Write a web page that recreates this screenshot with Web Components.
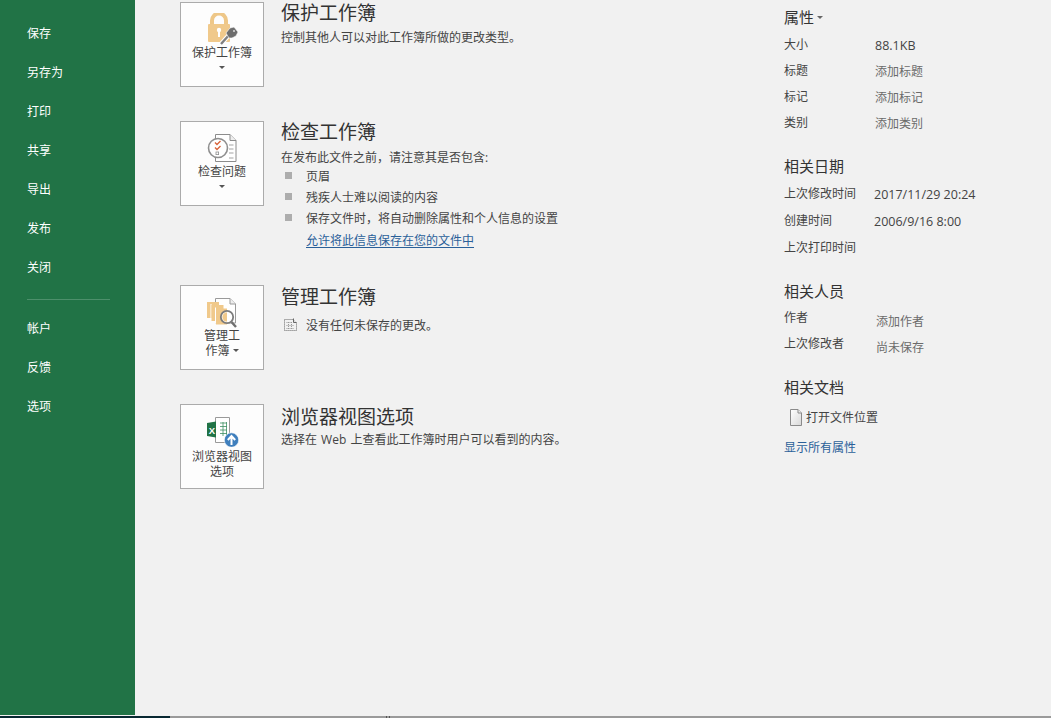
<!DOCTYPE html>
<html lang="zh">
<head>
<meta charset="utf-8">
<title>信息</title>
<style>
html,body{margin:0;padding:0;height:718px;overflow:hidden;background:#f1f1f1;font-family:"Open Sans","Noto Sans CJK SC",sans-serif;font-size:12px;color:#444}
</style>
</head>
<body>
<app-shell>
  <side-nav slot="nav">
    <nav-item>保存</nav-item><nav-item>另存为</nav-item><nav-item>打印</nav-item><nav-item>共享</nav-item><nav-item>导出</nav-item><nav-item>发布</nav-item><nav-item>关闭</nav-item>
    <nav-rule></nav-rule>
    <nav-item>帐户</nav-item><nav-item>反馈</nav-item><nav-item>选项</nav-item>
  </side-nav>

  <info-column slot="main">
    <info-section top="2" lift="-1" heading="保护工作簿">
      <tile-button slot="tile" caret="below" label="保护工作簿">
        <svg slot="icon" width="36" height="32" viewBox="0 0 36 32">
          <path d="M8 12V7.500a7 7 0 0 1 14 0V12" fill="none" stroke="#eec788" stroke-width="4"/>
          <rect x="4" y="11" width="22" height="18" rx="1" fill="#f0c98b"/>
          <circle cx="15" cy="17" r="2.200" fill="#fff"/><rect x="14" y="18" width="2" height="6" fill="#fff"/>
          <path d="M17 31l8-9" stroke="#fff" stroke-width="4.500"/>
          <path d="M17 31l8-9" stroke="#7f7f7f" stroke-width="2.400"/>
          <path d="M22 20l4-5 4-1 4 5-2 4-4 2-3 0z" fill="#6e6e6e" stroke="#fff" stroke-width=".6"/>
          <circle cx="30" cy="18" r="1" fill="#ddd"/>
        </svg>
      </tile-button>
      <desc-line>控制其他人可以对此工作簿所做的更改类型。</desc-line>
    </info-section>

    <info-section top="34" lift="-1" heading="检查工作簿">
      <tile-button slot="tile" caret="below" label="检查问题">
        <svg slot="icon" width="36" height="32" viewBox="0 0 36 32">
          <path d="M11.500 2.500H26l6 6v21H11.500z" fill="#fff" stroke="#8c8c8c"/>
          <path d="M26 2.500v6h6" fill="#eee" stroke="#8c8c8c"/>
          <path d="M25 13h4.500M25 17h4.500M25 21h4.500M25 26h4.500" stroke="#a3a3a3"/>
          <circle cx="14" cy="16" r="9.500" fill="#fff" stroke="#8f8f8f" stroke-width="1.600"/>
          <path d="M11 10.500l2 2 3.500-3.500M11 15.500l2 2 3.500-3.500" fill="none" stroke="#d9653b" stroke-width="1.400"/>
          <rect x="12" y="20" width="2.600" height="2.600" fill="none" stroke="#8f8f8f" stroke-width=".8"/>
        </svg>
      </tile-button>
      <desc-line extra>在发布此文件之前，请注意其是否包含:</desc-line>
      <bullet-line first>页眉</bullet-line>
      <bullet-line>残疾人士难以阅读的内容</bullet-line>
      <bullet-line>保存文件时，将自动删除属性和个人信息的设置</bullet-line>
      <bullet-line plain><a-link>允许将此信息保存在您的文件中</a-link></bullet-line>
    </info-section>

    <info-section top="35" lift="0" heading="管理工作簿">
      <tile-button slot="tile" label="管理工" label2="作簿" caret="inline">
        <svg slot="icon" width="36" height="32" viewBox="0 0 36 32">
          <path d="M11.500 2.500H26l5.500 5.500v19H11.500z" fill="#fff" stroke="#9a9a9a"/>
          <path d="M26 2.500V8h5.500" fill="#eee" stroke="#9a9a9a"/>
          <rect x="3" y="6" width="12" height="16" fill="#f0c98b"/>
          <rect x="6.500" y="8" width="1" height="16" fill="#fff"/>
          <rect x="7.500" y="9" width="12" height="16" fill="#f0c98b"/>
          <rect x="11" y="11.500" width="1" height="16" fill="#fff"/>
          <rect x="12" y="12.500" width="11" height="16" fill="#f0c98b"/>
          <path d="M27.500 26l4.500 5" stroke="#6f6f6f" stroke-width="2.400"/>
          <circle cx="23" cy="21" r="6.200" fill="#fff" fill-opacity=".75" stroke="#7c7c7c" stroke-width="1.800"/>
          <path d="M23 16.500a4.500 4.500 0 0 0 0 9z" fill="#f0c98b"/>
        </svg>
      </tile-button>
      <status-line>没有任何未保存的更改。</status-line>
    </info-section>

    <info-section top="34" lift="1" heading="浏览器视图选项">
      <tile-button slot="tile" low label="浏览器视图" label2="选项">
        <svg slot="icon" width="36" height="32" viewBox="0 0 36 32">
          <path d="M11.500 2.500H25.500V27.500H11.500z" fill="#fff" stroke="#9a9a9a"/>
          <path d="M16 8h7M16 11.500h7M16 15h7M16 18.500h7M19 7v14M22.500 7v14" stroke="#3f8f63" stroke-width=".8"/>
          <path d="M3 8l9-1.500v16L3 21z" fill="#217346"/>
          <text x="4.700" y="18.500" font-family="Liberation Sans" font-weight="700" font-size="9.500" fill="#fff">X</text>
          <circle cx="27.500" cy="25" r="7.200" fill="#3f7fbd" stroke="#fff" stroke-width=".6"/>
          <path d="M27.500 30v-8.500M23.800 25l3.700-4 3.700 4" fill="none" stroke="#fff" stroke-width="2"/>
        </svg>
      </tile-button>
      <desc-line tight>选择在 Web 上查看此工作簿时用户可以看到的内容。</desc-line>
    </info-section>
  </info-column>

  <prop-panel slot="side">
    <prop-head top="5" caret>属性</prop-head>
    <prop-row top="3" label="大小" value="88.1KB" kind="data" nudge></prop-row>
    <prop-row label="标题" value="添加标题"></prop-row>
    <prop-row label="标记" value="添加标记"></prop-row>
    <prop-row label="类别" value="添加类别"></prop-row>
    <prop-head top="18">相关日期</prop-head>
    <prop-row top="2" h="27" label="上次修改时间" value="2017/11/29 20:24" kind="data"></prop-row>
    <prop-row h="27" label="创建时间" value="2006/9/16 8:00" kind="data"></prop-row>
    <prop-row h="27" label="上次打印时间"></prop-row>
    <prop-head top="18">相关人员</prop-head>
    <prop-row top="2" label="作者" value="添加作者" drop></prop-row>
    <prop-row label="上次修改者" value="尚未保存" drop></prop-row>
    <prop-head top="18">相关文档</prop-head>
    <file-link>打开文件位置</file-link>
    <a-link block>显示所有属性</a-link>
  </prop-panel>

  <status-strip slot="foot"></status-strip>
</app-shell>

<script>
function def(name, css, html, init){
  customElements.define(name, class extends HTMLElement{
    constructor(){
      super();
      const r=this.attachShadow({mode:'open'});
      r.innerHTML='<style>'+css+'</style>'+html;
    }
    connectedCallback(){ if(init) init(this, this.shadowRoot); }
  });
}
def('app-shell',
 ':host{display:grid;grid-template-columns:135px 604px 1fr;grid-template-rows:716px 2px;width:1051px;height:718px;overflow:hidden;background:#f1f1f1}'+
 '.foot{grid-column:1/-1}',
 '<slot name="nav"></slot><slot name="main"></slot><slot name="side"></slot><div class="foot"><slot name="foot"></slot></div>');
def('side-nav',
 ':host{display:flex;flex-direction:column;background:#217346;padding-top:14px;box-sizing:border-box;height:715px}',
 '<slot></slot>');
def('nav-item',
 ':host{display:block;height:39px;line-height:39px;padding-left:27px;color:#fff;font-size:12px}',
 '<slot></slot>');
def('nav-rule',
 ':host{display:block;height:1px;width:83px;margin:12px 0 9px 27px;background:#4d8f6b}',
 '');
def('info-column',
 ':host{display:flex;flex-direction:column;padding-left:45px}',
 '<slot></slot>');
def('info-section',
 ':host{display:flex;gap:17px;flex:none}'+
 '.body{flex:1;display:flex;flex-direction:column}'+
 'h2{margin:0;font-weight:400;font-size:19px;line-height:24px;color:#333}',
 '<slot name="tile"></slot><div class="body"><h2></h2><slot></slot></div>',
 (h,r)=>{
   h.style.marginTop=h.getAttribute('top')+'px';
   r.querySelector('h2').textContent=h.getAttribute('heading');
   r.querySelector('.body').style.marginTop=h.getAttribute('lift')+'px';
 });
def('tile-button',
 ':host{display:flex;flex-direction:column;align-items:center;flex:none;box-sizing:border-box;width:84px;height:85px;border:1px solid #ababab;background:#fdfdfd;padding-top:10px;color:#444;font-size:12px;line-height:15px}'+
 '.ic{height:31px;display:flex;justify-content:center}'+
 '.l{display:block;height:15px;white-space:nowrap}'+
 '.a{margin-top:1px}'+
 ':host([low]) .a{margin-top:3px}'+
 '.car{display:inline-block;width:0;height:0;border:3px solid transparent;border-top:3px solid #555;border-bottom:0;vertical-align:middle}'+
 '.below{height:15px;display:flex;align-items:center;justify-content:center}'+
 '.in{margin-left:3px;position:relative;top:-1px}',
 '<div class="ic"><slot name="icon"></slot></div><span class="l a"></span><span class="l b"></span>',
 (h,r)=>{
   const a=r.querySelector('.a'), b=r.querySelector('.b');
   a.textContent=h.getAttribute('label');
   const c=h.getAttribute('caret');
   if(h.hasAttribute('label2')){ b.textContent=h.getAttribute('label2'); }
   if(c==='inline'){ b.insertAdjacentHTML('beforeend','<i class="car in"></i>'); }
   if(c==='below'){ b.classList.add('below'); b.innerHTML='<i class="car"></i>'; }
 });
def('desc-line',
 ':host{display:block;line-height:21px;height:21px;margin-top:2px;color:#444}'+
 ':host([extra]){margin-top:3px}'+
 ':host([tight]){margin-top:0;word-spacing:1px}',
 '<slot></slot>');
def('bullet-line',
 ':host{display:flex;align-items:center;height:21px;color:#444}'+
 ':host([first]){margin-top:-3px}'+
 ':host([plain]){margin-top:1px}'+
 'i{display:block;width:7px;height:7px;background:#adadad;margin:0 14px 0 4px}'+
 ':host([plain]) i{visibility:hidden}',
 '<i></i><slot></slot>');
def('a-link',
 ':host{color:#2a6099;text-decoration:underline;text-underline-offset:2px}'+
 ':host([block]){display:block;text-decoration:none;height:21px;line-height:21px;margin-top:10px}',
 '<slot></slot>');
def('status-line',
 ':host{display:flex;align-items:center;gap:8px;height:21px;margin-top:5px;padding-left:2px;color:#444}',
 '<svg width="15" height="15" viewBox="0 0 15 15"><path d="M1.500 2.500h8.500l3.500 3.500v7.500h-12z" fill="none" stroke="#666" stroke-dasharray="1 1"/><path d="M10.500 1.500v4h3" fill="none" stroke="#666"/><path d="M3.500 5.500h5M3.500 8.500h7M3.500 11.500h7M5.500 5v7M8.500 5v7" fill="none" stroke="#999" stroke-dasharray="1 1"/></svg><slot></slot>');
def('prop-panel',
 ':host{display:flex;flex-direction:column;padding:0 0 0 45px}',
 '<slot></slot>');
def('prop-head',
 ':host{display:flex;align-items:center;height:24px;line-height:24px;font-size:15px;color:#333}'+
 'i{display:none;width:0;height:0;border:3px solid transparent;border-top:3px solid #666;border-bottom:0;margin-left:3px}'+
 ':host([caret]) i{display:block}',
 '<slot></slot><i></i>',
 (h)=>{h.style.marginTop=h.getAttribute('top')+'px';});
def('prop-row',
 ':host{display:grid;grid-template-columns:91px 1fr;align-items:center;line-height:20px;color:#444}'+
 '.v{color:#6b6b6b;position:relative;top:1px}'+
 '.data{color:#444;left:-1px;font-size:12.5px}'+
 '.nudge{left:0}'+
 '.drop{top:4px;left:1px}',
 '<div class="k"></div><div class="v"></div>',
 (h,r)=>{
   h.style.height=(h.getAttribute('h')||26)+'px';
   h.style.marginTop=(h.getAttribute('top')||0)+'px';
   r.querySelector('.k').textContent=h.getAttribute('label');
   const v=r.querySelector('.v');
   v.textContent=h.getAttribute('value')||'';
   if(h.getAttribute('kind')) v.classList.add(h.getAttribute('kind'));
   if(h.hasAttribute('nudge')) v.classList.add('nudge');
   if(h.hasAttribute('drop')) v.classList.add('drop');
 });
def('file-link',
 ':host{display:flex;align-items:center;gap:4px;height:20px;margin-top:8px;padding-left:6px;color:#444}',
 '<svg width="12" height="17" viewBox="0 0 12 17"><defs><linearGradient id="g" x1="0" y1="0" x2="1" y2="1"><stop offset="0" stop-color="#fff"/><stop offset="1" stop-color="#d8d8d8"/></linearGradient></defs><path d="M.5.500H8L11.500 4v12.500H.5z" fill="url(#g)" stroke="#8a8a8a"/><path d="M8 .5V4h3.500" fill="#eee" stroke="#8a8a8a"/></svg><slot></slot>');
def('status-strip',
 ':host{display:flex;height:2px;background:#9a9a9a}'+
 '.d{width:170px;background:#082832}'+
 '.m{width:1px;background:#555;margin-left:216px}'+
 '.n{width:1px;background:#555;margin-left:2px}',
 '<div class="d"></div><div class="m"></div><div class="n"></div>');
</script>
</body>
</html>
